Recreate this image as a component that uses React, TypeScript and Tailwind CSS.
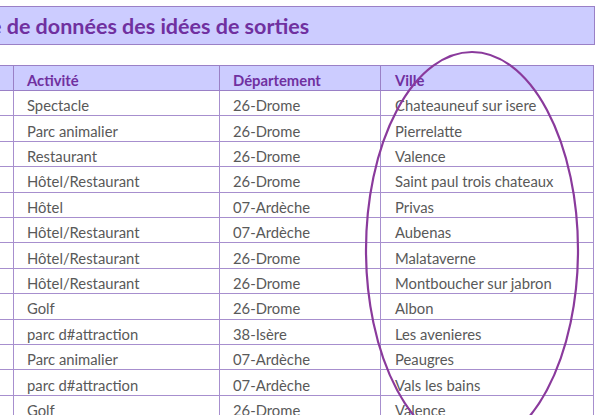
const rows = [
  ['Spectacle', '26-Drome', 'Chateauneuf sur isere'],
  ['Parc animalier', '26-Drome', 'Pierrelatte'],
  ['Restaurant', '26-Drome', 'Valence'],
  ['Hôtel/Restaurant', '26-Drome', 'Saint paul trois chateaux'],
  ['Hôtel', '07-Ardèche', 'Privas'],
  ['Hôtel/Restaurant', '07-Ardèche', 'Aubenas'],
  ['Hôtel/Restaurant', '26-Drome', 'Malataverne'],
  ['Hôtel/Restaurant', '26-Drome', 'Montboucher sur jabron'],
  ['Golf', '26-Drome', 'Albon'],
  ['parc d#attraction', '38-Isère', 'Les avenieres'],
  ['Parc animalier', '07-Ardèche', 'Peaugres'],
  ['parc d#attraction', '07-Ardèche', 'Vals les bains'],
  ['Golf', '26-Drome', 'Valence'],
]

export default function App() {
  return (
    <div className="relative w-[600px] h-[415px] overflow-hidden bg-white font-['Lato',sans-serif]">
      <div className="pt-[6px] w-[595px]">
        <div className="h-[39px] bg-[#ccccff] border border-l-0 border-[#9a80c6] flex items-center overflow-hidden">
          <h1 className="ml-[-10px] pt-[2px] text-[21.5px] font-bold text-[#7030a0] whitespace-nowrap leading-none">
            e de données des idées de sorties
          </h1>
        </div>
      </div>

      <div className="mt-[20px] grid grid-cols-[14px_206px_161px_213px] text-[14.8px] leading-none">
        <div className="h-[26px] bg-[#ccccff] border-y border-r border-[#9a80c6]" />
        <div className="h-[26px] bg-[#ccccff] border-y border-r border-[#9a80c6] pl-[13px] pt-[4px] flex items-center font-bold text-[#7030a0]">
          Activité
        </div>
        <div className="h-[26px] bg-[#ccccff] border-y border-r border-[#9a80c6] pl-[13px] pt-[4px] flex items-center font-bold text-[#7030a0]">
          Département
        </div>
        <div className="h-[26px] bg-[#ccccff] border-y border-r border-[#9a80c6] pl-[14px] pt-[4px] flex items-center font-bold text-[#7030a0]">
          Ville
        </div>
        {rows.map((r, i) => (
          <div key={i} className="contents text-[#595959]">
            <div className="h-[25.4px] border-b border-r border-[#a78fce]" />
            <div className="h-[25.4px] border-b border-r border-[#a78fce] pl-[13px] pt-[5px] flex items-center">{r[0]}</div>
            <div className="h-[25.4px] border-b border-r border-[#a78fce] pl-[13px] pt-[5px] flex items-center">{r[1]}</div>
            <div className="h-[25.4px] border-b border-r border-[#a78fce] pl-[14px] pt-[5px] flex items-center">{r[2]}</div>
          </div>
        ))}
      </div>

      <svg className="absolute left-0 top-0 pointer-events-none" width="600" height="415">
        <ellipse cx="472" cy="250" rx="106" ry="198" fill="none" stroke="#8a3a9c" strokeWidth="2.2" />
      </svg>
    </div>
  )
}
